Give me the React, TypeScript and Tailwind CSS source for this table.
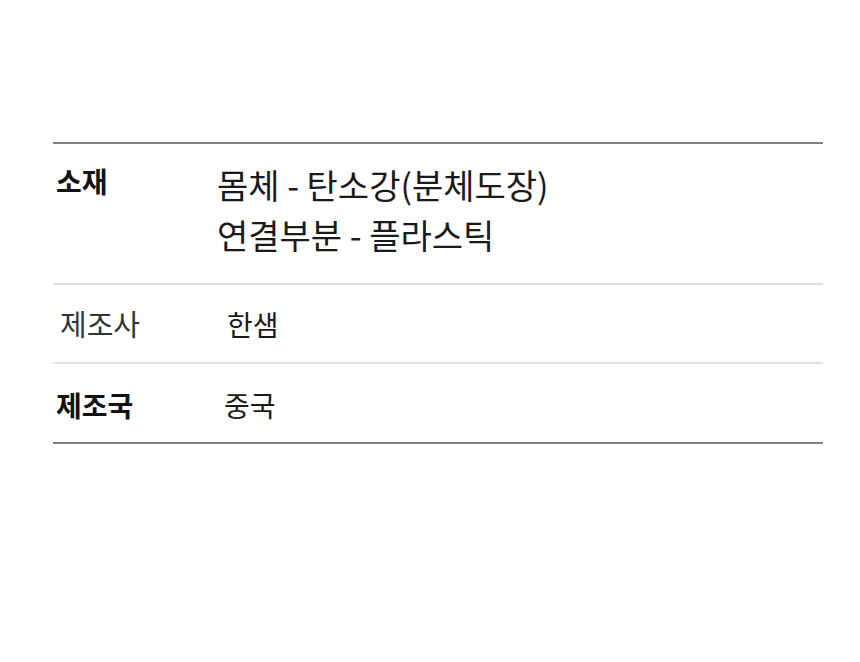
const rows = [
  {
    label: "소재",
    labelClass: "font-bold text-[28px] text-[#111] pl-[3px]",
    valueClass: "text-[34px] leading-[50px] text-[#1a1a1a] pl-[9px]",
    value: ["몸체 - 탄소강(분체도장)", "연결부분 - 플라스틱"],
    rowClass: "h-[139px] pt-[16px] items-start",
  },
  {
    label: "제조사",
    labelClass: "text-[29px] text-[#333] pl-[7px]",
    valueClass: "text-[28px] text-[#1a1a1a] pl-[19px]",
    value: ["한샘"],
    rowClass: "h-[79px] items-center border-t-2 border-[#e2e2e2]",
  },
  {
    label: "제조국",
    labelClass: "font-bold text-[28px] text-[#111] pl-[3px]",
    valueClass: "text-[28px] text-[#1a1a1a] pl-[16px]",
    value: ["중국"],
    rowClass: "h-[80px] items-center pt-[3px] border-t-2 border-[#e2e2e2]",
  },
];

export default function App() {
  return (
    <div
      className="w-[860px] h-[662px] bg-white pt-[142px] pl-[53px] pr-[37px]"
      style={{ fontFamily: '"Noto Sans CJK KR", "Noto Sans", sans-serif' }}
    >
      <div className="border-t-2 border-b-2 border-[#808080]">
        {rows.map((r) => (
          <div key={r.label} className={`flex ${r.rowClass}`}>
            <div className={`w-[155px] shrink-0 ${r.labelClass}`}>{r.label}</div>
            <div className={r.valueClass}>
              {r.value.map((v) => (
                <div key={v}>{v}</div>
              ))}
            </div>
          </div>
        ))}
      </div>
    </div>
  );
}
